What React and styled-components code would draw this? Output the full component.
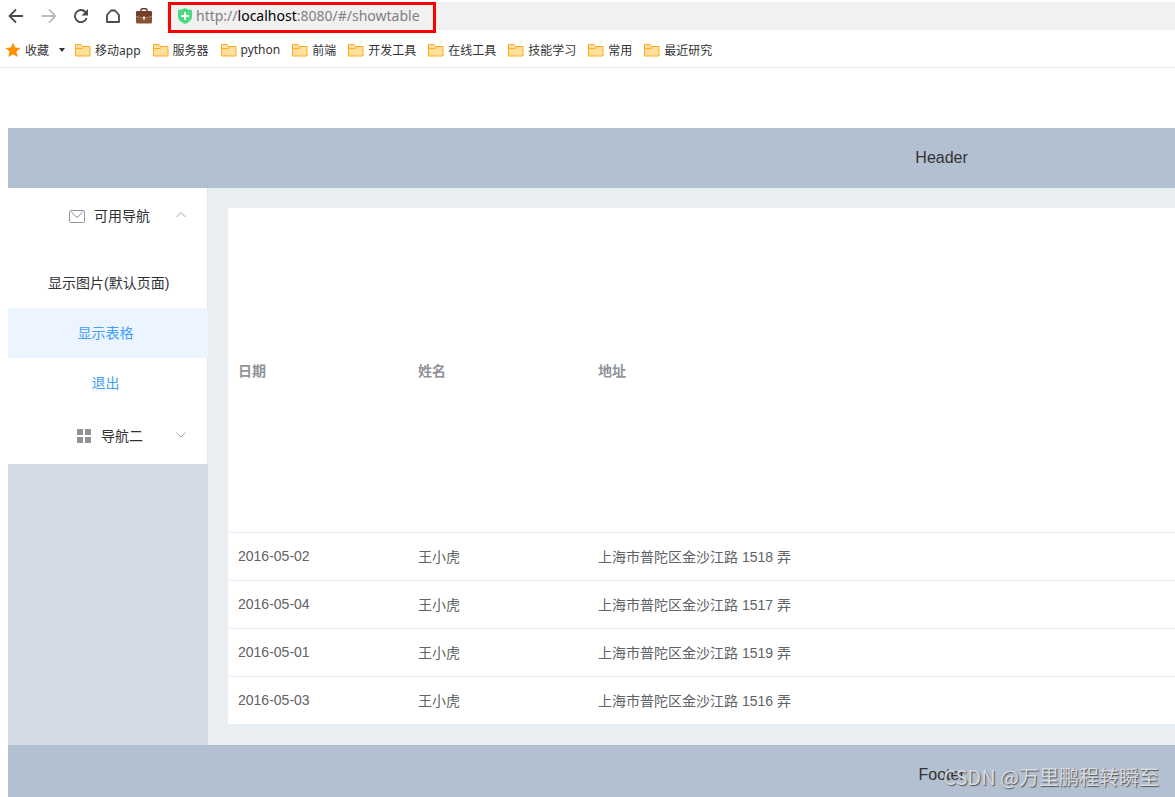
import React, { useState } from "react";
import styled, { createGlobalStyle } from "styled-components";

const bookmarks = [
  "移动app",
  "服务器",
  "python",
  "前端",
  "开发工具",
  "在线工具",
  "技能学习",
  "常用",
  "最近研究",
];

const tableData = [
  { date: "2016-05-02", name: "王小虎", address: "上海市普陀区金沙江路 1518 弄" },
  { date: "2016-05-04", name: "王小虎", address: "上海市普陀区金沙江路 1517 弄" },
  { date: "2016-05-01", name: "王小虎", address: "上海市普陀区金沙江路 1519 弄" },
  { date: "2016-05-03", name: "王小虎", address: "上海市普陀区金沙江路 1516 弄" },
];

export default function App() {
  const [active, setActive] = useState("table");

  return (
    <Page>
      <GlobalStyle />
      <BrowserBar />
      <BookmarkBar>
        <Bookmark href="#favorites">
          <StarIcon />
          收藏
        </Bookmark>
        <Caret type="button" aria-label="收藏">
          <svg width="6" height="4" viewBox="0 0 6 4">
            <path d="M0 0h6L3 4z" fill="#333" />
          </svg>
        </Caret>
        {bookmarks.map((name) => (
          <Bookmark key={name} href="#bookmark">
            <FolderIcon />
            {name}
          </Bookmark>
        ))}
      </BookmarkBar>
      <Container>
        <Header>Header</Header>
        <Body>
          <Aside>
            <Menu>
              <SubmenuTitle type="button">
                <TitleLabel>
                  <IconBox>
                    <MessageIcon />
                  </IconBox>
                  可用导航
                </TitleLabel>
                <Arrow up />
              </SubmenuTitle>
              <MenuGroup>
                <MenuItem href="#/showimg" $plain onClick={() => setActive("img")} $active={active === "img"}>
                  显示图片(默认页面)
                </MenuItem>
                <MenuItem href="#/showtable" onClick={() => setActive("table")} $active={active === "table"}>
                  显示表格
                </MenuItem>
                <MenuItem href="#/logout">退出</MenuItem>
              </MenuGroup>
              <SubmenuTitle type="button">
                <TitleLabel>
                  <IconBox>
                    <GridIcon />
                  </IconBox>
                  导航二
                </TitleLabel>
                <Arrow />
              </SubmenuTitle>
            </Menu>
          </Aside>
          <Main>
            <Table>
              <colgroup>
                <col width="180" />
                <col width="180" />
                <col />
              </colgroup>
              <thead>
                <tr>
                  <HeadCell>日期</HeadCell>
                  <HeadCell>姓名</HeadCell>
                  <HeadCell>地址</HeadCell>
                </tr>
              </thead>
              <tbody>
                {tableData.map((row) => (
                  <tr key={row.date}>
                    <Cell>{row.date}</Cell>
                    <Cell>{row.name}</Cell>
                    <Cell>{row.address}</Cell>
                  </tr>
                ))}
              </tbody>
            </Table>
          </Main>
        </Body>
        <Footer>Footer</Footer>
      </Container>
      <Watermark>CSDN @万里鹏程转瞬至</Watermark>
    </Page>
  );
}

function BrowserBar() {
  return (
    <Toolbar>
      <ToolButton type="button" aria-label="back">
        <svg width="16" height="16" viewBox="0 0 16 16" fill="none" stroke="#4a4a4a" strokeWidth="1.800">
          <path d="M15 8H2M8 1.500L1.500 8 8 14.500" />
        </svg>
      </ToolButton>
      <ToolButton type="button" aria-label="forward">
        <svg width="16" height="16" viewBox="0 0 16 16" fill="none" stroke="#bdbdbd" strokeWidth="1.800">
          <path d="M2 8h13M9 1.500L15.500 8 9 14.500" />
        </svg>
      </ToolButton>
      <ToolButton type="button" aria-label="reload">
        <svg width="16" height="16" viewBox="0 0 16 16">
          <path d="M13.500 4.200A6 6 0 1 0 14.600 10" fill="none" stroke="#4a4a4a" strokeWidth="1.900" />
          <path d="M16 1v6.500H9.500z" fill="#4a4a4a" />
        </svg>
      </ToolButton>
      <ToolButton type="button" aria-label="home">
        <svg width="16" height="16" viewBox="0 0 16 16" fill="none" stroke="#4a4a4a" strokeWidth="1.800" strokeLinejoin="round">
          <path d="M3 14V7L7 2.500h4L15 7v7z" />
        </svg>
      </ToolButton>
      <ToolButton type="button" aria-label="toolbox">
        <svg width="16" height="16" viewBox="0 0 16 16">
          <path d="M5 4V2Q5 .7 6.500 .7h3Q11 .7 11 2V4" fill="none" stroke="#5b3a2c" strokeWidth="1.400" />
          <rect x="0" y="3" width="16" height="12.500" rx="1.500" fill="#8a5234" />
          <path d="M0 4.500Q0 3 1.500 3h13Q16 3 16 4.500V8q-8 4-16 0z" fill="#744027" />
          <path d="M0 8.500q8 3 16 0" fill="none" stroke="#b98766" strokeWidth=".8" />
          <rect x="7" y="8.500" width="2" height="3" fill="#f4e3c8" />
        </svg>
      </ToolButton>
      <AddressBar>
        <ShieldIcon />
        <span>
          http://<Host>localhost</Host>:8080/#/showtable
        </span>
        <Highlight />
      </AddressBar>
    </Toolbar>
  );
}

function ShieldIcon() {
  return (
    <svg width="14" height="16" viewBox="0 0 14 16">
      <path d="M0 2Q4 2 7 0q3 2 7 2v7q0 4-7 7-7-3-7-7z" fill="#4cd97f" />
      <path d="M7 4v8M3 8h8" stroke="#fff" strokeWidth="2" />
    </svg>
  );
}

function StarIcon() {
  return (
    <svg width="16" height="16" viewBox="0 0 16 16">
      <path
        d="M8 .5l2.200 5 5.300.5-4 3.600 1.200 5.400L8 12.200 3.300 15l1.200-5.400-4-3.600 5.300-.5z"
        fill="#ff9000"
      />
    </svg>
  );
}

function FolderIcon() {
  return (
    <svg width="16" height="14" viewBox="0 0 16 14">
      <path d="M.5 1.500h5.500L7.500 3.500h7.500v9.500H.5z" fill="#ffdf9e" stroke="#fbab1c" strokeLinejoin="round" />
      <path d="M1 5.500h6l1.500-1" fill="none" stroke="#fbab1c" />
    </svg>
  );
}

function MessageIcon() {
  return (
    <svg width="16" height="13" viewBox="0 0 16 13" fill="none" stroke="#909399">
      <rect x=".5" y=".5" width="15" height="12" rx="1" />
      <path d="M2 1.500l4.500 5q1.500 1.200 3 0l4.500-5" />
    </svg>
  );
}

function GridIcon() {
  return (
    <svg width="14" height="14" viewBox="0 0 14 14" fill="#909399">
      <path d="M0 0h6v6H0zM8 0h6v6H8zM0 8h6v6H0zM8 8h6v6H8z" />
    </svg>
  );
}

function Arrow({ up }) {
  return (
    <ArrowIcon width="12" height="12" viewBox="0 0 12 12" fill="none" stroke="#a6a9ae">
      <path d={up ? "M1.500 8L6 3.500 10.500 8" : "M1.500 3.500L6 8l4.500-4.500"} />
    </ArrowIcon>
  );
}

const GlobalStyle = createGlobalStyle`
  * {
    box-sizing: border-box;
  }
  body {
    margin: 0;
    background: #fff;
    font-family: "Liberation Sans", "Noto Sans CJK SC", sans-serif;
  }
  button {
    border: 0;
    padding: 0;
    background: none;
    font: inherit;
    cursor: pointer;
  }
  a {
    text-decoration: none;
  }
  svg {
    flex: none;
    display: block;
  }
`;

const Page = styled.div`
  position: relative;
  height: 100vh;
  overflow: hidden;
`;

const Toolbar = styled.div`
  display: flex;
  align-items: center;
  gap: 16px;
  height: 32px;
  padding-left: 8px;
`;

const ToolButton = styled.button`
  width: 16px;
  height: 16px;
`;

const AddressBar = styled.div`
  position: relative;
  flex: 1;
  display: flex;
  align-items: center;
  gap: 4px;
  height: 28px;
  margin-left: -2px;
  padding-left: 12px;
  border-radius: 4px 0 0 4px;
  background: #f1f1f1;
  color: #808080;
  font-family: "Noto Sans", sans-serif;
  font-size: 14px;
  line-height: 20px;
`;

const Host = styled.span`
  color: #000;
`;

/* red marker drawn over the address */
const Highlight = styled.div`
  position: absolute;
  top: 0;
  left: 2px;
  width: 268px;
  height: 31px;
  border: 3px solid #f00;
`;

const BookmarkBar = styled.nav`
  display: flex;
  align-items: center;
  gap: 12px;
  height: 36px;
  padding: 0 5px;
  border-bottom: 1px solid #ebebeb;
`;

const Bookmark = styled.a`
  display: flex;
  align-items: center;
  gap: 4px;
  color: #333;
  font-family: "Noto Sans", "Noto Sans CJK SC", sans-serif;
  font-size: 12px;
  white-space: nowrap;
`;

const Caret = styled.button`
  margin: 0 -2px;
`;

const Container = styled.section`
  margin: 60px 0 0 8px;
`;

const Header = styled.header`
  padding-left: 60%;
  background: #b3c0d1;
  color: #333;
  font-size: 16px;
  line-height: 60px;
  text-align: center;
`;

const Footer = styled(Header).attrs({ as: "footer" })``;

const Body = styled.div`
  display: flex;
`;

const Aside = styled.aside`
  flex: none;
  width: 200px;
  background: #d3dce6;
`;

const Menu = styled.nav`
  border-right: 1px solid #e6e6e6;
  background: #fff;
  font-size: 14px;
`;

const SubmenuTitle = styled.button`
  display: flex;
  align-items: center;
  width: 100%;
  height: 56px;
  padding: 0 20px 2px;
  color: #303133;
`;

const TitleLabel = styled.span`
  flex: 1;
  display: flex;
  align-items: center;
  justify-content: center;
  gap: 5px;
`;

const IconBox = styled.span`
  display: flex;
  justify-content: center;
  width: 24px;
  padding-top: 2px;
`;

const ArrowIcon = styled.svg`
  margin-left: -12px;
`;

const MenuGroup = styled.div`
  padding-top: 14px;
`;

const MenuItem = styled.a`
  display: block;
  height: 50px;
  margin-right: -1px;
  padding: 0 45px 0 40px;
  background: ${(props) => (props.$active ? "#ecf5ff" : "transparent")};
  color: ${(props) => (props.$plain ? "#303133" : "#409eff")};
  line-height: 50px;
  text-align: center;
  white-space: nowrap;
`;

const Main = styled.main`
  flex: 1;
  padding: 20px 0 20px 20px;
  background: #e9eef3;
`;

const Table = styled.table`
  width: 100%;
  border-spacing: 0;
  table-layout: fixed;
  background: #fff;
  font-size: 14px;
  text-align: left;
`;

const Cell = styled.td`
  height: 48px;
  padding: 0 10px 2px;
  border-bottom: 1px solid #ebeef5;
  color: #606266;
`;

const HeadCell = styled(Cell).attrs({ as: "th", scope: "col" })`
  height: 325px;
  padding: 0 10px;
  color: #909399;
`;

const Watermark = styled.div`
  position: absolute;
  right: 16px;
  bottom: 6px;
  color: #d8dbe0;
  font-family: "Noto Sans CJK SC", sans-serif;
  font-size: 20px;
  line-height: 28px;
  text-shadow: 1px 1px 1px #555;
`;
